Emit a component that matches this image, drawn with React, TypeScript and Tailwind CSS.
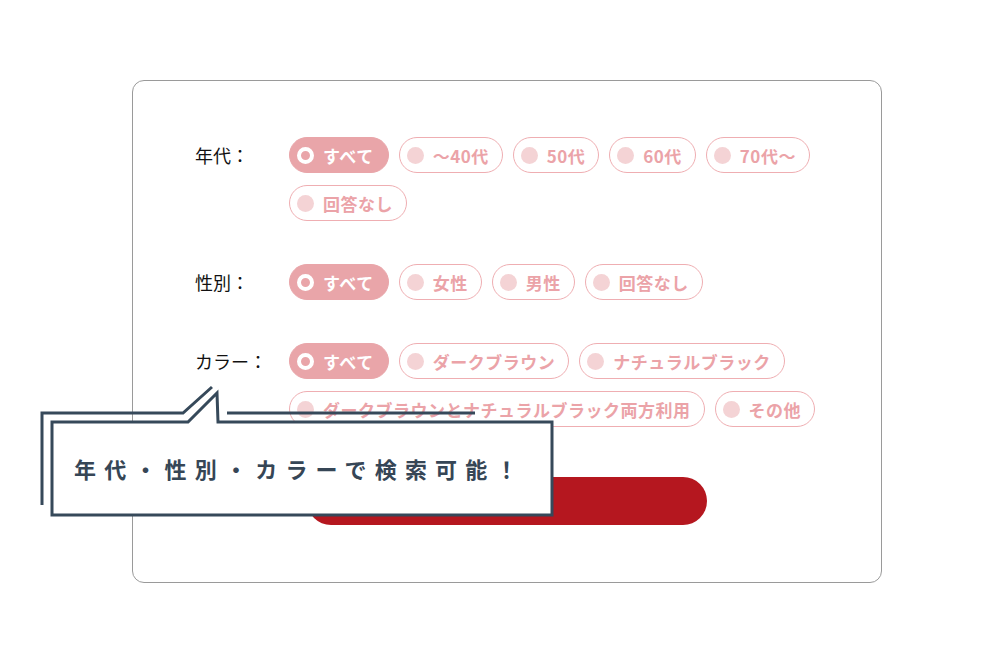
import React from "react";

interface FilterRowProps {
  label: string;
  options: string[];
}

const Chip: React.FC<{ text: string; active?: boolean }> = ({ text, active }) => {
  if (active) {
    return (
      <div className="flex h-[36px] items-center gap-[9px] rounded-full border border-[#e9a5a9] bg-[#e9a5a9] pl-[7px] pr-[14px]">
        <span className="block h-[17px] w-[17px] rounded-full border-[4px] border-white" />
        <span className="text-[17px] font-bold leading-none tracking-[0.5px] text-white">{text}</span>
      </div>
    );
  }
  return (
    <div className="flex h-[36px] items-center gap-[9px] rounded-full border border-[#efaeb2] bg-white pl-[7px] pr-[13px]">
      <span className="block h-[17px] w-[17px] rounded-full bg-[#f4d3d5]" />
      <span className="text-[17px] font-bold leading-none tracking-[0.5px] text-[#eba3a8]">{text}</span>
    </div>
  );
};

const FilterRow: React.FC<FilterRowProps> = ({ label, options }) => {
  return (
    <div className="flex items-start">
      <div className="flex h-[36px] w-[94px] shrink-0 items-center text-[18px] text-[#111]">
        {label}
      </div>
      <div className="flex w-[535px] flex-wrap gap-x-[10px] gap-y-[12px]">
        {options.map((o, i) => (
          <Chip key={o} text={o} active={i === 0} />
        ))}
      </div>
    </div>
  );
};

export default function App() {
  return (
    <div
      className="relative h-[666px] w-[1000px] overflow-hidden bg-white"
      style={{ fontFamily: '"Noto Sans CJK JP", "Noto Sans", sans-serif' }}
    >
      {/* search card */}
      <div className="ml-[132px] mt-[80px] flex h-[503px] w-[750px] flex-col rounded-[12px] border border-[#9a9a9a] pl-[62px] pt-[56px]">
        <FilterRow label="年代：" options={["すべて", "〜40代", "50代", "60代", "70代〜", "回答なし"]} />
        <div className="mt-[43px]">
          <FilterRow label="性別：" options={["すべて", "女性", "男性", "回答なし"]} />
        </div>
        <div className="mt-[43px]">
          <FilterRow
            label="カラー："
            options={["すべて", "ダークブラウン", "ナチュラルブラック", "ダークブラウンとナチュラルブラック両方利用", "その他"]}
          />
        </div>
        <div className="mt-[50px] flex justify-center pr-[62px]">
          <button className="h-[48px] w-[400px] rounded-full bg-[#b5171f] text-[17px] font-bold text-white">
            検索する
          </button>
        </div>
      </div>

      {/* callout */}
      <svg className="absolute left-0 top-0" width="1000" height="666" viewBox="0 0 1000 666">
        <g fill="none" stroke="#36495a" strokeWidth="3" strokeLinejoin="miter">
          <polyline points="42,505 42,413 183,413 212,387" />
          <line x1="227" y1="413" x2="475" y2="413" />
        </g>
        <path
          d="M52,422 L188,422 L217,393 L218,422 L552,422 L552,515 L52,515 Z"
          fill="#fff"
          stroke="#36495a"
          strokeWidth="3"
        />
      </svg>
      <div className="absolute left-[52px] top-[422px] flex h-[93px] w-[500px] items-center pl-[22px] text-[22px] font-bold tracking-[8.2px] text-[#364656]">
        年代・性別・カラーで検索可能！
      </div>
    </div>
  );
}
